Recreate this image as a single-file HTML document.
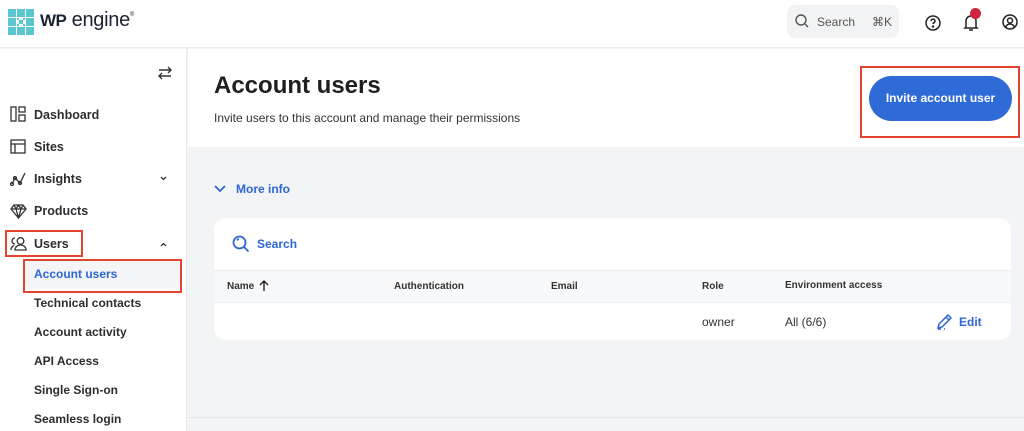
<!DOCTYPE html>
<html><head><style>
*{box-sizing:border-box;margin:0;padding:0}
body{width:1024px;height:431px;overflow:hidden;background:#f3f4f5;font-family:"Liberation Sans",sans-serif;color:#202124;position:relative}
.abs{position:absolute}
.hdr{left:0;top:0;width:1024px;height:48px;background:#fff;border-bottom:1px solid #e8eaec}
.side{left:0;top:49px;width:187px;height:382px;background:#fff;border-right:1px solid #e8eaec}
.top{left:188px;top:49px;width:836px;height:98px;background:#fff}
.nav{position:absolute;left:34px;font-size:12.5px;font-weight:bold;color:#2b2d30}
.sub{position:absolute;left:34px;font-size:12px;font-weight:bold;color:#2b2d30}
.ic{position:absolute;left:10px}
.card{left:214px;top:218px;width:797px;height:122px;background:#fff;border-radius:12px;overflow:hidden}
.th{font-size:10px;font-weight:bold;color:#333;position:absolute;top:281px}
.red{position:absolute;border:2px solid #e4452f}
</style></head><body>
<div class="abs hdr"></div>
<!-- logo -->
<svg class="abs" style="left:8px;top:9px" width="26" height="26" viewBox="0 0 26 26">
<g fill="#5cc6cf"><rect x="0" y="0" width="8" height="8"/><rect x="9" y="0" width="8" height="8"/><rect x="18" y="0" width="8" height="8"/>
<rect x="0" y="9" width="8" height="8"/><rect x="18" y="9" width="8" height="8"/>
<rect x="0" y="18" width="8" height="8"/><rect x="9" y="18" width="8" height="8"/><rect x="18" y="18" width="8" height="8"/>
<rect x="11" y="11" width="4" height="4"/><rect x="9" y="9" width="2" height="2"/><rect x="15" y="9" width="2" height="2"/><rect x="9" y="15" width="2" height="2"/><rect x="15" y="15" width="2" height="2"/></g></svg>
<div class="abs" style="left:40px;top:9px;font-size:20px;color:#1a2233;letter-spacing:-0.3px"><b style="font-size:17px;letter-spacing:-0.5px">WP</b> engine<span style="font-size:6px;vertical-align:top;position:relative;top:3px">®</span></div>
<div class="abs" style="left:787px;top:5px;width:112px;height:33px;background:#f2f3f4;border-radius:8px"></div>
<svg class="abs" style="left:795px;top:14px" width="14" height="14" viewBox="0 0 14 14" fill="none" stroke="#555" stroke-width="1.4"><circle cx="6" cy="6" r="5"/><path d="M10 10l3 3"/></svg>
<div class="abs" style="left:817px;top:15px;font-size:12px;color:#555">Search</div>
<div class="abs" style="left:872px;top:15px;font-size:12px;color:#555">⌘K</div>
<svg class="abs" style="left:924px;top:14px" width="18" height="18" viewBox="0 0 18 18" fill="none" stroke="#222" stroke-width="1.5"><circle cx="9" cy="9" r="7"/><path d="M7 7a2 2 0 1 1 2.5 2c-.4.2-.5.6-.5 1"/><circle cx="9" cy="12.5" r=".5" fill="#222"/></svg>
<svg class="abs" style="left:962px;top:13px" width="18" height="20" viewBox="0 0 18 20" fill="none" stroke="#222" stroke-width="1.5"><path d="M4 14V8a5 5 0 0 1 10 0v6l1 1H3z"/><path d="M7 17h4"/></svg>
<div class="abs" style="left:970px;top:8px;width:11px;height:11px;border-radius:50%;background:#d1243f"></div>
<svg class="abs" style="left:1001px;top:13px" width="18" height="18" viewBox="0 0 18 18" fill="none" stroke="#222" stroke-width="1.5"><circle cx="9" cy="9" r="7"/><circle cx="9" cy="7.5" r="2.5"/><path d="M4.5 14c1-2 2.5-3 4.5-3s3.5 1 4.5 3"/></svg>

<div class="abs side"></div>
<svg class="abs" style="left:157px;top:66px" width="16" height="14" viewBox="0 0 16 14" fill="none" stroke="#333" stroke-width="1.4"><path d="M2 4h12M11 1l3 3-3 3M14 10H2M5 7l-3 3 3 3"/></svg>
<svg class="ic" style="top:106px" width="16" height="16" viewBox="0 0 16 16" fill="none" stroke="#333" stroke-width="1.3"><rect x="1" y="1" width="5" height="14"/><rect x="9" y="1" width="6" height="5"/><rect x="9" y="9" width="6" height="6"/></svg>
<div class="nav" style="top:108px">Dashboard</div>
<svg class="ic" style="top:139px" width="16" height="15" viewBox="0 0 16 15" fill="none" stroke="#333" stroke-width="1.3"><rect x="1" y="1" width="14" height="13"/><path d="M1 5h14M5 5v9"/></svg>
<div class="nav" style="top:140px">Sites</div>
<svg class="ic" style="top:171px" width="17" height="16" viewBox="0 0 17 16" fill="none" stroke="#333" stroke-width="1.3"><path d="M2 13l3-6 5 5 5-10"/><circle cx="2" cy="13" r="1.5"/><circle cx="5" cy="7" r="1.5"/><circle cx="10" cy="12" r="1.5"/></svg>
<div class="nav" style="top:172px">Insights</div>
<svg class="abs" style="left:160px;top:176px" width="7" height="5" viewBox="0 0 7 5" fill="none" stroke="#333" stroke-width="1.3"><path d="M1 1l2.5 2.5L6 1"/></svg>
<svg class="ic" style="top:204px" width="17" height="15" viewBox="0 0 17 15" fill="none" stroke="#333" stroke-width="1.3"><path d="M4 1h9l3 4-7.5 9L1 5z M1 5h15 M6 5l2.5 9 2.5-9 M4 1l2 4 2.5-4 2.5 4 2-4"/></svg>
<div class="nav" style="top:204px">Products</div>
<svg class="ic" style="top:236px" width="17" height="15" viewBox="0 0 17 15" fill="none" stroke="#333" stroke-width="1.3"><circle cx="10.5" cy="5" r="3.3"/><path d="M5 14c0-3 2.5-5 5.5-5s5.5 2 5.5 5z"/><path d="M5 2a3 3 0 0 0 0 6M1 14c0-2 1-3.5 3-4.5"/></svg>
<div class="nav" style="top:237px">Users</div>
<svg class="abs" style="left:160px;top:242px" width="7" height="5" viewBox="0 0 7 5" fill="none" stroke="#333" stroke-width="1.3"><path d="M1 4l2.5-2.5L6 4"/></svg>
<div class="red" style="left:5px;top:230px;width:78px;height:27px"></div>
<div class="abs" style="left:25px;top:261px;width:155px;height:28px;background:#f4f5f6;border-radius:6px"></div>
<div class="red" style="left:23px;top:259px;width:159px;height:34px"></div>
<div class="sub" style="top:267px;color:#2e66d6">Account users</div>
<div class="sub" style="top:296px">Technical contacts</div>
<div class="sub" style="top:325px">Account activity</div>
<div class="sub" style="top:354px">API Access</div>
<div class="sub" style="top:383px">Single Sign-on</div>
<div class="sub" style="top:412px">Seamless login</div>

<div class="abs top"></div>
<div class="abs" style="left:214px;top:72px;font-size:24px;font-weight:bold;color:#1e1f21">Account users</div>
<div class="abs" style="left:214px;top:111px;font-size:12px;color:#333">Invite users to this account and manage their permissions</div>
<div class="red" style="left:860px;top:66px;width:160px;height:72px"></div>
<div class="abs" style="left:869px;top:76px;width:143px;height:45px;background:#2f6bd6;border-radius:23px;color:#fff;font-size:12px;font-weight:bold;text-align:center;line-height:45px">Invite account user</div>

<svg class="abs" style="left:214px;top:184px" width="12" height="9" viewBox="0 0 12 9" fill="none" stroke="#2e66d6" stroke-width="1.8"><path d="M1 2l5 5 5-5"/></svg>
<div class="abs" style="left:236px;top:182px;font-size:12px;font-weight:bold;color:#2e66d6">More info</div>

<div class="abs card">
<div style="position:absolute;left:0;top:52px;width:100%;height:33px;background:#f8f9fa;border-top:1px solid #eceef0;border-bottom:1px solid #eceef0"></div>
</div>
<svg class="abs" style="left:232px;top:235px" width="18" height="18" viewBox="0 0 18 18" fill="none" stroke="#2e66d6" stroke-width="1.8"><circle cx="7.5" cy="7.5" r="6"/><path d="M12 12l4.5 4.5M5 5.5a3 3 0 0 1 2-1.5"/></svg>
<div class="abs" style="left:257px;top:237px;font-size:12px;font-weight:bold;color:#2e66d6">Search</div>
<div class="th" style="left:227px">Name</div>
<svg class="abs" style="left:259px;top:280px" width="10" height="12" viewBox="0 0 10 12" fill="none" stroke="#222" stroke-width="1.4"><path d="M5 11V1M1 5l4-4 4 4"/></svg>
<div class="th" style="left:394px">Authentication</div>
<div class="th" style="left:551px">Email</div>
<div class="th" style="left:702px">Role</div>
<div class="th" style="left:785px;top:280px">Environment access</div>
<div class="abs" style="left:702px;top:315px;font-size:12px;color:#333">owner</div>
<div class="abs" style="left:785px;top:315px;font-size:12px;color:#333">All (6/6)</div>
<svg class="abs" style="left:936px;top:313px" width="18" height="17" viewBox="0 0 18 17" fill="none" stroke="#2e66d6" stroke-width="1.5"><path d="M2 15l1-4L12 2l3 3-9 9z M10 4l3 3 M2 16h3 M8 16h1"/></svg>
<div class="abs" style="left:959px;top:315px;font-size:12px;font-weight:bold;color:#2e66d6">Edit</div>
<div class="abs" style="left:188px;top:417px;width:836px;height:1px;background:#e4e6e8"></div>
</body></html>
